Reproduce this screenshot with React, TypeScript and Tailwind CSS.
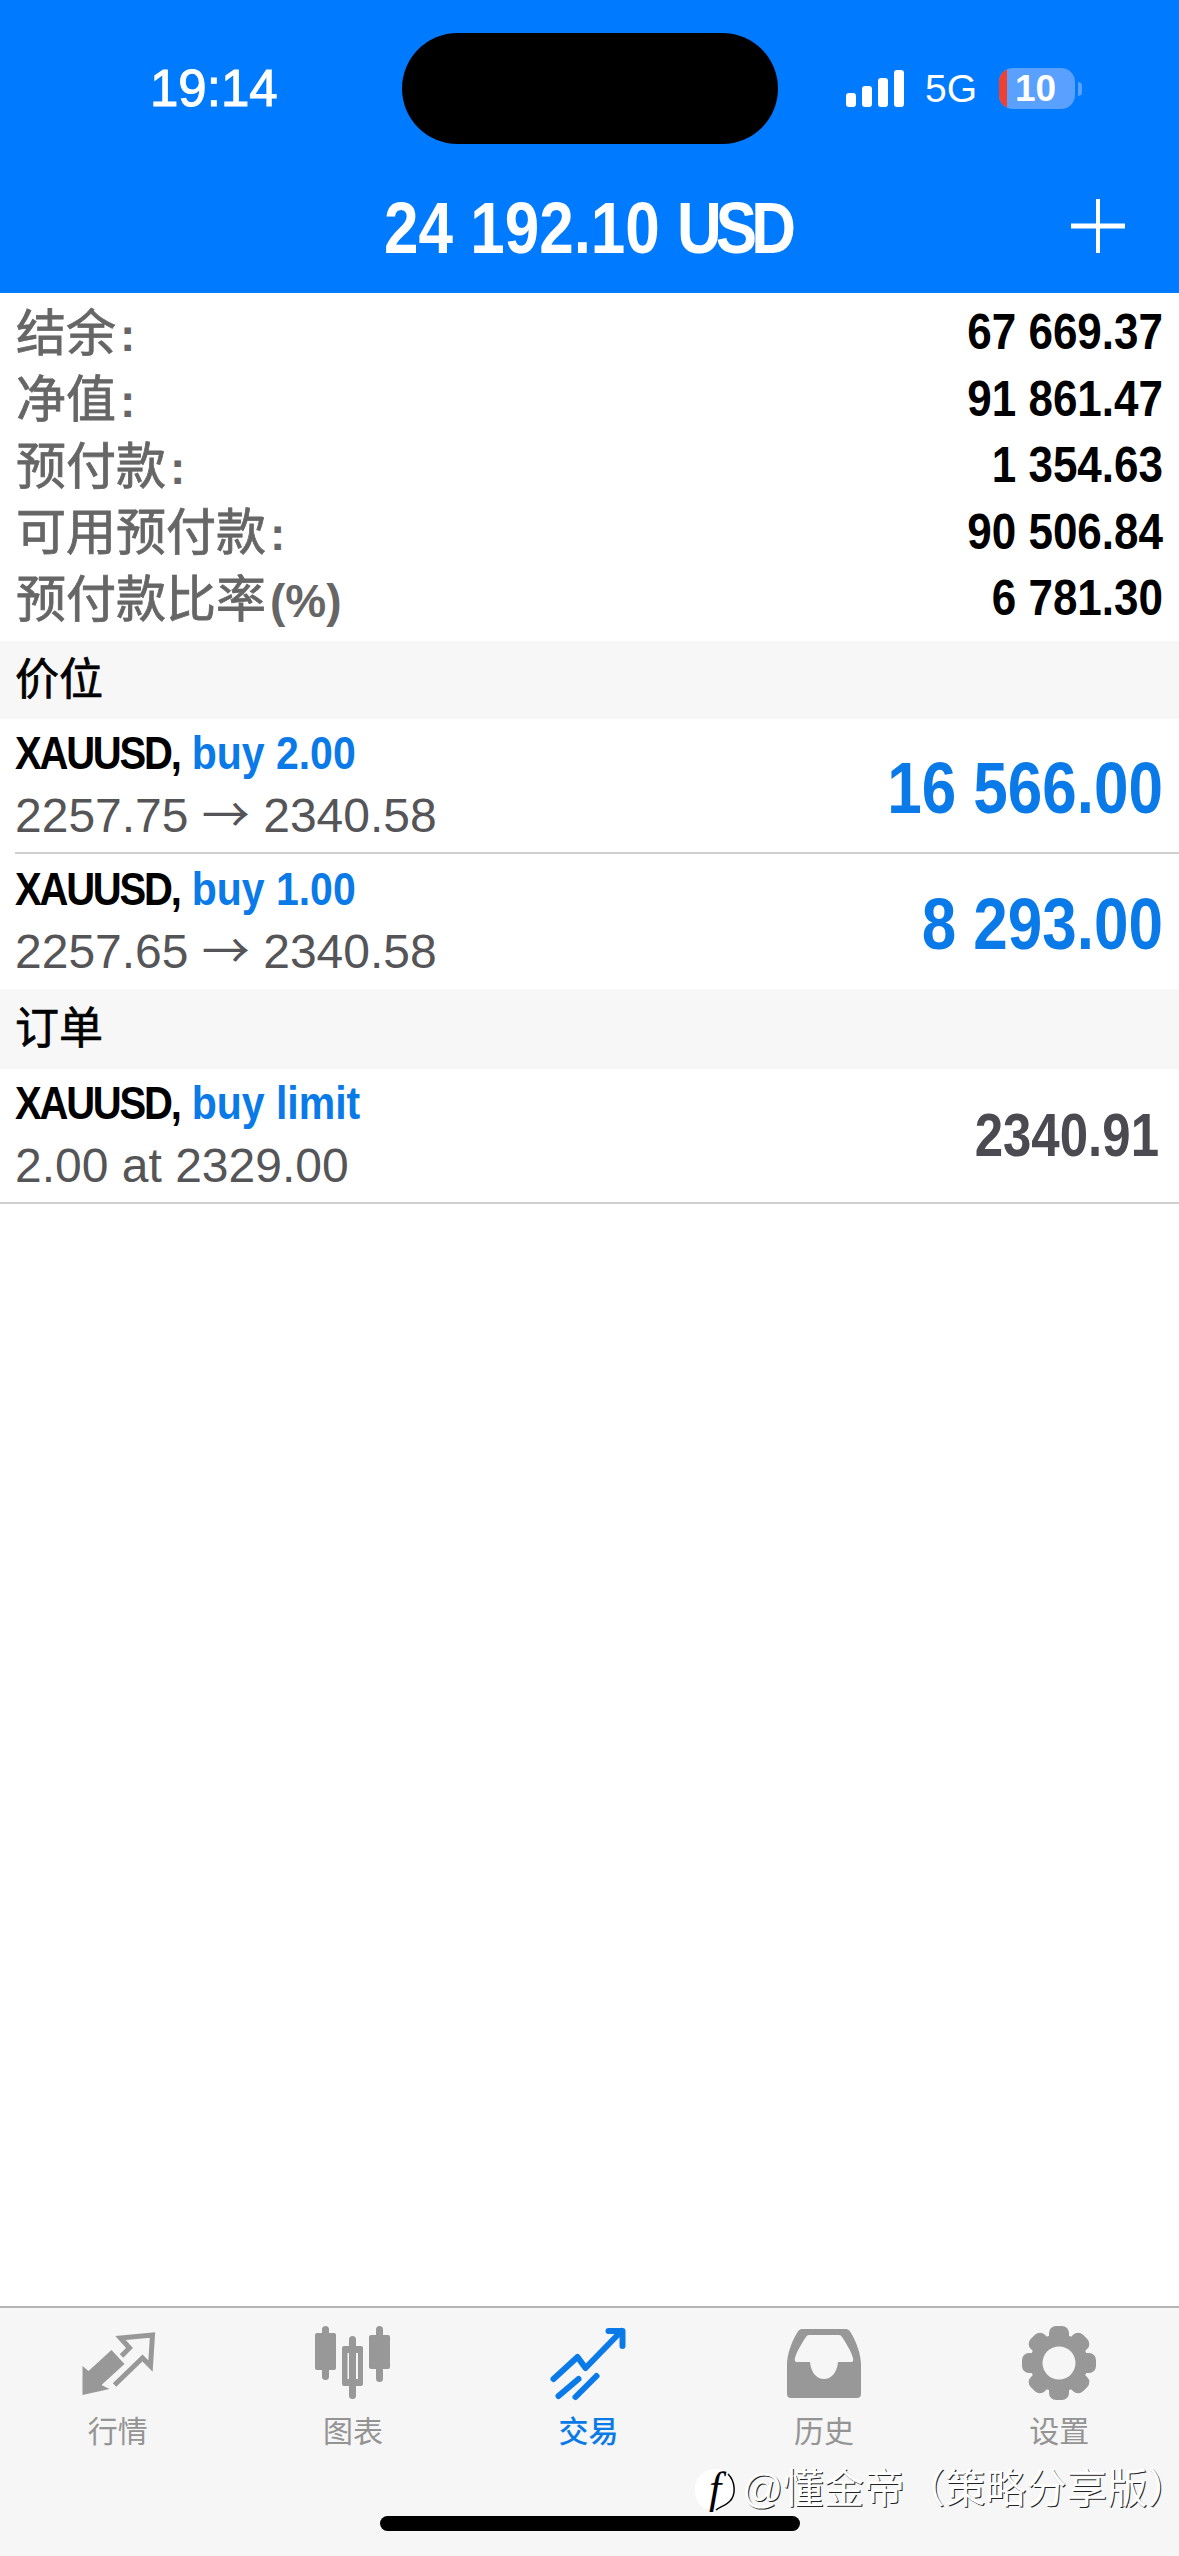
import type { ReactNode } from 'react'

const summary = [
  { label: '结余', suffix: ':', value: '67 669.37' },
  { label: '净值', suffix: ':', value: '91 861.47' },
  { label: '预付款', suffix: ':', value: '1 354.63' },
  { label: '可用预付款', suffix: ':', value: '90 506.84' },
  { label: '预付款比率', suffix: '(%)', value: '6 781.30' },
]

function Tall({ className, children }: { className?: string; children: ReactNode }) {
  return <span className={`inline-block ${className ?? ''}`}>{children}</span>
}

function StatusBar() {
  return (
    <div className="mt-[33px] flex h-[111px] items-center pl-[150px] text-white">
      <span className="w-[252px] text-[51px] leading-none font-medium [-webkit-text-stroke:1px_white]">19:14</span>
      <div className="h-[111px] w-[376px] rounded-full bg-black" />
      <div className="ml-[68px] flex h-[41px] items-end gap-[6px] pb-[2px]">
        <span className="h-[14px] w-[10px] rounded-[3px] bg-white" />
        <span className="h-[21px] w-[10px] rounded-[3px] bg-white" />
        <span className="h-[29px] w-[10px] rounded-[3px] bg-white" />
        <span className="h-[37px] w-[10px] rounded-[3px] bg-white" />
      </div>
      <span className="ml-[21px] text-[39px] leading-none">5G</span>
      <div className="ml-[22px] flex h-[41px] w-[76px] items-center overflow-hidden rounded-[14px] bg-[#5aa0ff]">
        <span className="h-full w-[8px] bg-[#f0402f]" />
        <span className="ml-[8px] text-[37px] leading-none font-bold">10</span>
      </div>
      <span className="ml-[3px] h-[14px] w-[4px] rounded-r-full bg-[#5aa0ff]" />
    </div>
  )
}

function Header() {
  return (
    <header className="h-[293px] bg-[#007aff]">
      <StatusBar />
      <div className="relative mt-[46px] flex h-[76px] items-center justify-center text-white">
        <Tall className="ml-[-5px] scale-y-[1.18] text-[62px] leading-none font-bold">
          24 192.10 <span className="tracking-[-6px]">USD</span>
        </Tall>
        <svg className="absolute top-[9px] left-[1071px]" width="54" height="54" viewBox="0 0 54 54">
          <path d="M27 0V54" stroke="white" strokeWidth="4" />
          <path d="M0 27H54" stroke="white" strokeWidth="5" />
        </svg>
      </div>
    </header>
  )
}

function SectionTitle({ title, className }: { title: string; className: string }) {
  return (
    <div
      className={`flex items-center bg-[#f7f7f7] pl-[15px] text-[44px] leading-none text-black [-webkit-text-stroke:0.7px_black] ${className}`}
    >
      {title}
    </div>
  )
}

function TradeRow({
  side,
  detail,
  right,
  wrapClass,
  lineClass,
}: {
  side: string
  detail: ReactNode
  right: ReactNode
  wrapClass?: string
  lineClass: string
}) {
  return (
    <div className={`pl-[15px] ${wrapClass ?? ''}`}>
      <div className={`flex items-center justify-between ${lineClass}`}>
        <div className="flex flex-col">
          <div className="flex h-[62px] items-center pb-[2px] text-[40px] leading-none font-bold">
            <Tall className="scale-y-[1.15] tracking-[-2.2px] text-black">XAUUSD,</Tall>
            <Tall className="ml-[12px] scale-y-[1.13] text-[41px] text-[#0a7ae8]">{side}</Tall>
          </div>
          <div className="h-[62px] text-[48px] leading-[62px] text-[#555558]">{detail}</div>
        </div>
        {right}
      </div>
    </div>
  )
}

function Route({ from, to }: { from: string; to: string }) {
  return (
    <>
      {from} <span className="font-['Noto_Sans_CJK_SC'] leading-[0]">→</span> {to}
    </>
  )
}

function Profit({ value }: { value: string }) {
  return (
    <Tall className="scale-y-[1.18] pt-[6px] pr-[16px] text-[62px] leading-none font-bold text-[#0a7ae8]">{value}</Tall>
  )
}

function QuotesIcon() {
  return (
    <svg width="76" height="76" viewBox="0 0 76 76" fill="#989898">
      <g transform="translate(1.5 6)">
        <path d="M1 63 1 34 7 39 30 18 43 32 20 53 28 57Z" />
        <path d="M33 53 61 26 69 34 71 3 39 6 48 16 40 24" fill="none" stroke="#989898" strokeWidth="5" />
      </g>
    </svg>
  )
}

function ChartIcon() {
  return (
    <svg width="76" height="76" viewBox="0 0 76 76" fill="#989898">
      <rect x="7" y="0" width="7" height="54" rx="3.5" />
      <rect x="0" y="7" width="21" height="37" rx="2" />
      <rect x="34" y="10" width="7" height="63" rx="3.5" />
      <path
        fillRule="evenodd"
        d="M29 20H46Q48 20 48 22V58Q48 60 46 60H29Q27 60 27 58V22Q27 20 29 20ZM32.500 27V53H43V27Z"
      />
      <rect x="61" y="0" width="7" height="56" rx="3.500" />
      <rect x="54" y="9" width="21" height="34" rx="2" />
    </svg>
  )
}

function TradeIcon() {
  return (
    <svg
      width="76"
      height="76"
      viewBox="0 0 76 76"
      fill="none"
      stroke="#0a7ae8"
      strokeWidth="6"
      strokeLinecap="round"
      strokeLinejoin="round"
    >
      <g transform="translate(0.5 1)">
        <path d="M3 52 27 30 35 41 71 4" />
        <path d="M58 4H72V19" />
        <path d="M8 69 28 52" />
        <path d="M25 70 46 49" />
      </g>
    </svg>
  )
}

function HistoryIcon() {
  return (
    <svg width="76" height="76" viewBox="0 0 76 76" fill="#989898">
      <g transform="translate(1 3)">
        <path
          fillRule="evenodd"
          d="M15 0H59Q62 0 64 4C70 14 74 26 74 36V65Q74 69 70 69H4Q0 69 0 65V36C0 26 4 14 10 4Q12 0 15 0ZM22 6Q20 6 19 8C15 14 10 22 8 29Q7 33 10 33H23C24 44 30 50 37 50 44 50 50 44 51 33H64Q67 33 66 29C64 22 59 14 55 8Q54 6 52 6Z"
        />
      </g>
    </svg>
  )
}

function SettingsIcon() {
  return (
    <svg width="76" height="76" viewBox="0 0 76 76" fill="#989898">
      <circle cx="38" cy="37" r="29" />
      {[0, 45, 90, 135].map((angle) => (
        <rect key={angle} x="28" y="0" width="20" height="74" rx="7" transform={`rotate(${angle} 38 37)`} />
      ))}
      <circle cx="38" cy="37" r="16.500" fill="#f6f6f6" />
    </svg>
  )
}

const tabs = [
  { label: '行情', icon: <QuotesIcon /> },
  { label: '图表', icon: <ChartIcon /> },
  { label: '交易', icon: <TradeIcon />, active: true },
  { label: '历史', icon: <HistoryIcon /> },
  { label: '设置', icon: <SettingsIcon /> },
]

function Watermark() {
  return (
    <div className="absolute top-[161px] left-[695px] flex items-center text-[40.5px] leading-none whitespace-nowrap text-white [text-shadow:1px_1px_0_#222]">
      <span className="relative flex h-[40px] w-[40px] items-center justify-center">
        <svg className="absolute top-0 left-0" width="42" height="48" viewBox="0 0 42 48">
          <path
            d="M20 0C32 0 40 9 40 20 40 31 31 38 24 39 20 40 19 44 18 47 18 42 16 40 12 40 4 38 0 30 0 20 0 9 9 0 20 0Z"
            fill="white"
          />
          <path d="M33 5C40 12 42 26 34 33 30 37 24 38 21 41" fill="none" stroke="black" strokeWidth="1.500" />
        </svg>
        <span className="relative font-['Liberation_Serif'] text-[44px] text-black italic [text-shadow:none]">f</span>
      </span>
      <span className="ml-[7px]">
        @懂金帝（策略分享版<span className="tracking-[-22px]">）</span>
      </span>
    </div>
  )
}

function TabBar() {
  return (
    <nav className="relative h-[250px] border-t-2 border-[#b4b4b4] bg-[#f6f6f6]">
      <div className="grid grid-cols-5 pt-[18px] pr-[2px]">
        {tabs.map((tab) => (
          <div key={tab.label} className="flex flex-col items-center">
            {tab.icon}
            <span
              className={`mt-[15px] text-[30px] leading-none ${
                tab.active ? 'font-medium text-[#0a7ae8]' : 'text-[#949494]'
              }`}
            >
              {tab.label}
            </span>
          </div>
        ))}
      </div>
      <div className="mt-[69px] ml-[380px] h-[15px] w-[420px] rounded-full bg-black" />
      <Watermark />
    </nav>
  )
}

export default function App() {
  return (
    <div className="flex h-[2556px] w-[1179px] flex-col overflow-hidden bg-white font-['Liberation_Sans','Noto_Sans_CJK_SC',sans-serif]">
      <Header />
      <main className="flex-1">
        <div className="pt-[6px] pb-[9px]">
          {summary.map((row) => (
            <div key={row.label} className="flex h-[66.5px] items-center justify-between px-[16px]">
              <span className="flex items-baseline pt-[3px] text-[50px] leading-none text-[#666666] [-webkit-text-stroke:0.8px_#666666]">
                {row.label}
                <span className="ml-[4px] text-[46px] font-bold [-webkit-text-stroke:0]">{row.suffix}</span>
              </span>
              <Tall className="scale-y-[1.13] text-[44px] leading-none font-bold text-black">{row.value}</Tall>
            </div>
          ))}
        </div>
        <SectionTitle title="价位" className="h-[78px]" />
        <TradeRow
          side="buy 2.00"
          detail={<Route from="2257.75" to="2340.58" />}
          right={<Profit value="16 566.00" />}
          lineClass="h-[135px] border-b-2 border-[#d0d0d0]"
        />
        <TradeRow
          side="buy 1.00"
          detail={<Route from="2257.65" to="2340.58" />}
          right={<Profit value="8 293.00" />}
          lineClass="h-[135px]"
        />
        <SectionTitle title="订单" className="h-[80px]" />
        <TradeRow
          side="buy limit"
          detail="2.00 at 2329.00"
          right={<Tall className="scale-y-[1.18] pr-[20px] text-[51px] leading-none font-bold text-[#4a4a50]">2340.91</Tall>}
          wrapClass="border-b-2 border-[#d0d0d0]"
          lineClass="h-[133px]"
        />
      </main>
      <TabBar />
    </div>
  )
}
